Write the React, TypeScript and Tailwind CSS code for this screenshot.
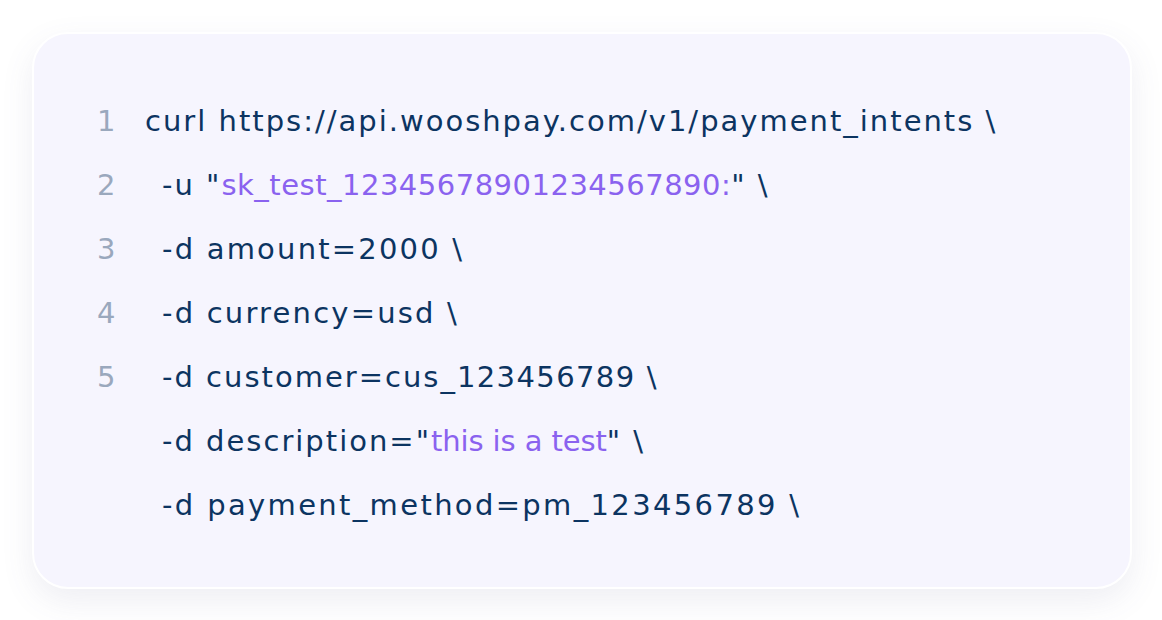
import React from "react";

type Part = { t: string; p?: boolean; cls?: string };
const lines: { n?: string; indent?: boolean; parts: Part[] }[] = [
  { n: "1", parts: [{ t: "curl https://api.wooshpay.com/v1/payment_intents \\" }] },
  { n: "2", indent: true, parts: [{ t: "-u \"" }, { t: "sk_test_12345678901234567890:", p: true, cls: "tracking-[0.5px]" }, { t: "\" \\" }] },
  { n: "3", indent: true, parts: [{ t: "-d amount=2000 \\", cls: "tracking-[2.2px]" }] },
  { n: "4", indent: true, parts: [{ t: "-d currency=usd \\", cls: "tracking-[2.2px]" }] },
  { n: "5", indent: true, parts: [{ t: "-d customer=cus_" }, { t: "123456789", cls: "tracking-[1.4px]" }, { t: " \\" }] },
  { indent: true, parts: [{ t: "-d description=\"" }, { t: "this is a test", p: true, cls: "tracking-[-0.1px]" }, { t: "\" \\" }] },
  { indent: true, parts: [{ t: "-d payment_method=pm_123456789 \\", cls: "tracking-[2.35px]" }] },
];

export default function App() {
  return (
    <div className="w-[1162px] h-[620px] bg-white p-8 font-['DejaVu_Sans',sans-serif]">
      <div className="w-[1100px] h-[557px] rounded-[36px] border-2 border-white bg-[#f6f5fe] shadow-[0_12px_32px_rgba(90,90,140,0.10)] pt-[55px] pl-[63px]">
        {lines.map((l, i) => (
          <div key={i} className="flex h-16 items-center text-[29px] leading-none tracking-[2px]">
            <div className="w-12 text-[#9aa8bd] tracking-normal">{l.n ?? ""}</div>
            <div className={"whitespace-pre text-[#0c3461] " + (l.indent ? "pl-[17px]" : "")}>
              {l.parts.map((p, j) => (
                <span key={j} className={(p.p ? "text-[#8a62ef] " : "") + (p.cls ?? "")}>{p.t}</span>
              ))}
            </div>
          </div>
        ))}
      </div>
    </div>
  );
}
